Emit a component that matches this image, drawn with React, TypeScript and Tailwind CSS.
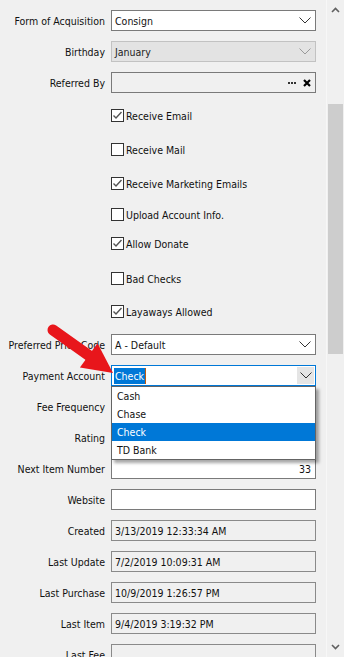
import React from "react";

const Chevron = ({ color = "#333" }: { color?: string }) => (
  <svg width="12" height="7" viewBox="0 0 12 7" className="shrink-0">
    <path d="M0.5 0.5 L6 6 L11.5 0.5" fill="none" stroke={color} strokeWidth="1" />
  </svg>
);

const Label = ({ text }: { text: string }) => (
  <div className="w-[105px] text-right whitespace-nowrap shrink-0 pt-[3px]">{text}</div>
);

const Row = ({ label, mt, children }: { label: string; mt: string; children: React.ReactNode }) => (
  <div className={`flex items-center h-[21px] shrink-0 ${mt}`}>
    <Label text={label} />
    <div className="ml-[6px] w-[205px] h-[21px]">{children}</div>
  </div>
);

const Box = ({ children, cls }: { children?: React.ReactNode; cls: string }) => (
  <div className={`w-full h-full border flex items-center pl-[3px] pr-[3px] ${cls}`}>{children}</div>
);

const T = ({ children, cls = "" }: { children: React.ReactNode; cls?: string }) => (
  <span className={`pt-[3px] ${cls}`}>{children}</span>
);

const Check = ({ label, checked, mt }: { label: string; checked: boolean; mt: string }) => (
  <div className={`flex items-center h-[21px] shrink-0 ${mt}`}>
    <div className="w-[111px] shrink-0" />
    <div className="w-[13px] h-[13px] border border-[#333] bg-white flex items-center justify-center shrink-0">
      {checked && (
        <svg width="11" height="11" viewBox="0 0 11 11">
          <path d="M1.5 5.5 L4 8 L9.5 2" fill="none" stroke="#555" strokeWidth="1.4" />
        </svg>
      )}
    </div>
    <div className="ml-[2px] whitespace-nowrap pt-[2px]">{label}</div>
  </div>
);

export default function App() {
  return (
    <div className="relative w-[344px] h-[657px] overflow-hidden bg-[#f0f0f0] flex items-start font-['DejaVu_Sans_Condensed','Liberation_Sans',Arial,sans-serif] text-[10.5px] text-[#111]">
      <div className="w-[326px] shrink-0 flex flex-col pt-[10px]">
        <Row label="Form of Acquisition" mt="mt-0">
          <Box cls="border-[#7a7a7a] bg-white justify-between pr-[4px]">
            <T>Consign</T>
            <Chevron />
          </Box>
        </Row>
        <Row label="Birthday" mt="mt-[10px]">
          <Box cls="border-[#c2c2c2] bg-[#e3e3e3] justify-between pr-[4px]">
            <T cls="text-[#222]">January</T>
            <Chevron color="#9a9a9a" />
          </Box>
        </Row>
        <Row label="Referred By" mt="mt-[10px]">
          <Box cls="border-[#7a7a7a] bg-[#f0f0f0] justify-end pr-[4px]">
            <div className="flex items-center gap-[1px] mr-[7px]">
              <span className="w-[2px] h-[2px] bg-[#333]" />
              <span className="w-[2px] h-[2px] bg-[#333]" />
              <span className="w-[2px] h-[2px] bg-[#333]" />
            </div>
            <svg width="8" height="8" viewBox="0 0 8 8">
              <path d="M1 1 L7 7 M7 1 L1 7" stroke="#000" strokeWidth="2.2" />
            </svg>
          </Box>
        </Row>
        <Check label="Receive Email" checked mt="mt-[12px]" />
        <Check label="Receive Mail" checked={false} mt="mt-[13px]" />
        <Check label="Receive Marketing Emails" checked mt="mt-[13px]" />
        <Check label="Upload Account Info." checked={false} mt="mt-[10px]" />
        <Check label="Allow Donate" checked mt="mt-[8px]" />
        <Check label="Bad Checks" checked={false} mt="mt-[14px]" />
        <Check label="Layaways Allowed" checked mt="mt-[12px]" />
        <Row label="Preferred Price Code" mt="mt-[12px]">
          <Box cls="border-[#7a7a7a] bg-white justify-between pr-[4px]">
            <T>A - Default</T>
            <Chevron />
          </Box>
        </Row>
        <Row label="Payment Account" mt="mt-[10px]">
          <div className="relative w-full h-full border border-[#0078d7] bg-white flex items-center justify-between pl-[2px]">
            <div className="flex items-center">
              <span className="bg-[#0078d7] text-white px-[1px] h-[16px] flex items-center pt-[2px]">Check</span>
              <span className="w-[1px] h-[16px] bg-[#c05a10]" />
            </div>
            <div className="w-[17px] h-[17px] bg-[#e5e5e5] flex items-center justify-center mr-[1px]">
              <Chevron />
            </div>
          </div>
        </Row>
        <Row label="Fee Frequency" mt="mt-[10px]">
          <Box cls="border-[#7a7a7a] bg-white" />
        </Row>
        <Row label="Rating" mt="mt-[10px]">
          <Box cls="border-[#7a7a7a] bg-white" />
        </Row>
        <Row label="Next Item Number" mt="mt-[10px]">
          <Box cls="border-[#7a7a7a] bg-white justify-end pr-[4px]">
            <T>33</T>
          </Box>
        </Row>
        <Row label="Website" mt="mt-[10px]">
          <Box cls="border-[#7a7a7a] bg-white" />
        </Row>
        <Row label="Created" mt="mt-[10px]">
          <Box cls="border-[#8a8a8a] bg-[#f0f0f0]">
            <T>3/13/2019 12:33:34 AM</T>
          </Box>
        </Row>
        <Row label="Last Update" mt="mt-[10px]">
          <Box cls="border-[#8a8a8a] bg-[#f0f0f0]">
            <T>7/2/2019 10:09:31 AM</T>
          </Box>
        </Row>
        <Row label="Last Purchase" mt="mt-[10px]">
          <Box cls="border-[#8a8a8a] bg-[#f0f0f0]">
            <T>10/9/2019 1:26:57 PM</T>
          </Box>
        </Row>
        <Row label="Last Item" mt="mt-[10px]">
          <Box cls="border-[#8a8a8a] bg-[#f0f0f0]">
            <T>9/4/2019 3:19:32 PM</T>
          </Box>
        </Row>
        <Row label="Last Fee" mt="mt-[10px]">
          <Box cls="border-[#8a8a8a] bg-[#f0f0f0]" />
        </Row>
      </div>

      {/* scrollbar */}
      <div className="w-[18px] h-[657px] shrink-0 flex flex-col border-l border-[#f7f7f7] bg-[#f0f0f0]">
        <div className="h-[20px] shrink-0 flex items-center justify-center">
          <svg width="9" height="6" viewBox="0 0 9 6">
            <path d="M1 5 L4.5 1.5 L8 5" fill="none" stroke="#606060" strokeWidth="1.6" />
          </svg>
        </div>
        <div className="flex-1 pl-[1px]">
          <div className="mt-[84px] w-[15px] h-[250px] bg-[#cdcdcd]" />
        </div>
        <div className="h-[20px] shrink-0 flex items-center justify-center">
          <svg width="9" height="6" viewBox="0 0 9 6">
            <path d="M1 1 L4.5 4.5 L8 1" fill="none" stroke="#606060" strokeWidth="1.6" />
          </svg>
        </div>
      </div>

      {/* dropdown list */}
      <div className="absolute left-[111px] top-[386px] w-[205px] h-[74px] bg-white border border-[#646464] shadow-[3px_3px_3px_rgba(0,0,0,0.35)] flex flex-col">
        <div className="h-[18px] flex items-center pl-[5px] pt-[2px]">Cash</div>
        <div className="h-[18px] flex items-center pl-[5px] pt-[2px]">Chase</div>
        <div className="h-[18px] flex items-center pl-[5px] pt-[2px] bg-[#0078d7] text-white">Check</div>
        <div className="h-[18px] flex items-center pl-[5px] pt-[2px]">TD Bank</div>
      </div>

      {/* red arrow annotation */}
      <svg className="absolute left-0 top-0 pointer-events-none" width="344" height="657" viewBox="0 0 344 657">
        <line x1="53" y1="330" x2="91" y2="357" stroke="#e8161b" strokeWidth="11" strokeLinecap="round" />
        <polygon points="113,373 79.9,367.6 97.5,343.2" fill="#e8161b" />
      </svg>
    </div>
  );
}
